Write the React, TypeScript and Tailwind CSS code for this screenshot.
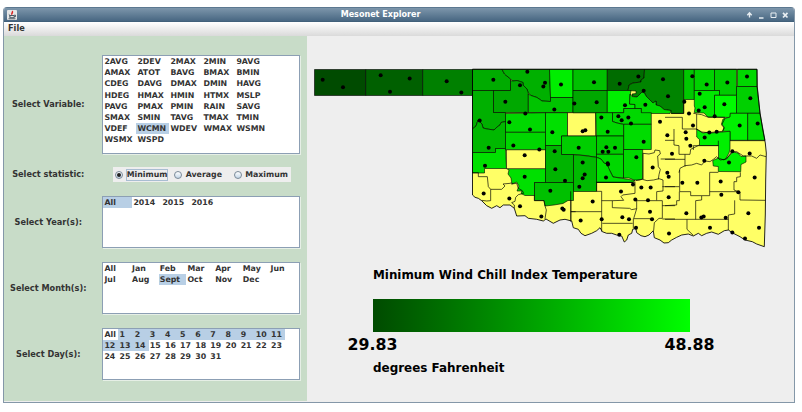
import React from "react";

type Shape = [string, string];

/* ---------- County map data ---------- */

const OUTLINE =
  "472.5,69.3 757,69.3 757.3,87 760,113 763,131 765.3,143 766.3,153 765.7,180 765.3,215 764.3,246.7 756.7,244 752.3,241.7 745,240 740,236.7 733.3,233.3 728.3,230 724.3,230.7 718.3,234.3 711.7,232 706.7,233.3 701.7,235.7 698.3,233.3 693.3,236 688.3,234 681.7,235 676.7,237.3 671.7,240 668.3,242.7 664,243 660,240 654.3,237.7 653.3,230.7 649,235 645,236.7 641,235.7 636.7,232.7 635.7,228.3 632.7,229.3 631.7,233.3 628.3,235 626.7,240 624.3,242 621.7,236 616.7,235 611.7,233.3 606.7,233.3 602.3,231.7 600,227.7 596.7,230.7 591.7,233.3 585,235.7 581,233.3 578.3,229.3 573.3,227.7 571.7,221 565,219.3 560,220 553.3,223.3 546,219 543.3,221 536.7,219.3 528.3,218.3 525,215.7 516.7,216 514.3,208.3 510,205 503.3,205 500,207.7 496.7,205.7 491.7,208.3 486.7,205.7 481.7,200.7 478.3,198.3 475,197.3 472.5,195";

const COUNTIES: Shape[] = [
  ["#004b00", "314.5,69.5 365.7,69.5 365.7,95.5 314.5,95.5"],
  ["#006000", "365.7,69.5 422.7,69.5 422.7,95.5 365.7,95.5"],
  ["#008000", "422.7,69.5 472.5,69.5 472.5,95.5 422.7,95.5"],
  ["#00ab00", "472.5,69.3 502,69.3 504.5,74 510.5,79 510.5,90.5 472.5,90.5"],
  ["#00b000", "502,69.3 549.5,69.3 550.5,97 550.5,101.5 542,101 537,97.5 531,95.5 528,92.5 527,89 523,85 523,82.5 517,80.5 513,81 510.5,79 504.5,74"],
  ["#00ee00", "549.5,69.3 573,69.3 573,97.5 550.5,97.5"],
  ["#00b000", "472.5,90.5 493.5,90.5 493.5,112.5 505.5,112.5 505.5,121.5 501,122.5 500,125 497,127 494,130 487,129 483,128 482,124 478,120 476,126 472.5,129"],
  ["#00a800", "493.5,90.5 510.5,90.5 510.5,80.5 513,81 517,80.5 523,82.5 523,85 527,89 528.3,93 528.3,112.5 493.5,112.5"],
  ["#00c400", "528.3,94 531,95.5 537,97.5 542,101 550.5,101.5 550.5,97.5 573,97.5 573,112.5 528.3,112.5"],
  ["#00d800", "505.5,113.5 545.5,112.7 545.5,132.3 505.5,132.3"],
  ["#00b800", "472.5,129 476,126 478,120 482,124 483,128 487,129 494,130 497,127 500,125 501,122.5 505.5,121.5 505.5,148.5 495.5,148.5 495.5,152.5 472.5,152.5"],
  ["#00d600", "505.5,132.3 545.5,132.3 545.5,150 505.5,150"],
  ["#00e000", "545.5,112.7 567.5,112.7 567.5,136 561.5,136 561.5,145.5 545.5,145.5"],
  ["#ffff66", "567.5,112.7 595.5,112.7 595.5,136 567.5,136"],
  ["#00ce00", "561.5,136 596.5,136 596.5,157.3 585,155.5 573.5,154.5 561.5,154.5"],
  ["#00e000", "472.5,152.5 495.5,152.5 495.5,148.5 505.5,148.5 506.5,168.5 484.5,168.5 484.5,173 472.5,173"],
  ["#00e000", "506.5,168.5 545.5,168.5 545.5,182.5 534.5,182.5 534.5,195.5 525,195.5 521,193.5 522,191 517,191 519,186 516.5,182 512,184 511,178 508,174 509,170"],
  ["#ffff66", "506.5,149.8 545.5,149.8 545.5,168.7 506.5,168.7"],
  ["#00b400", "545.5,145.5 561.5,145.5 561.5,154.5 573.5,154.5 573.5,182.5 545.5,182.5"],
  ["#00c000", "534.5,182.5 573.5,182.5 573.5,200.5 568,200.5 563,203.5 554,205 545,206 544,200.5 534.5,200.5"],
  ["#00ba00", "573.5,154.7 585,155.7 596.5,157.3 596.5,191.5 573.5,191.5"],
  ["#00c000", "573,69.3 607.3,69.3 607.3,90.5 573,90.5"],
  ["#00a800", "573,90.5 607.3,90.5 607.3,112.7 573,112.7"],
  ["#006c00", "607.3,69.3 644.5,69.3 644,78 641,80 641,82 633,83 629,85 628,90.5 607.3,90.5"],
  ["#008400", "644.5,69.3 683.7,69.3 683.7,113.5 671,113.5 671,110.5 664,109.5 660,106 656,105 656,101 653,103 650,100 646,96 644.5,93 642,92 640,94 637,97 632,96 632,94 636,93.5 636,91 628,90.5 629,85 633,83 641,82 641,80 644,78"],
  ["#00ee00", "607.3,90.5 631,90.5 630,96 629.5,104 635,104.5 635,108.5 623.7,108.5 623.7,112.7 607.3,112.7"],
  ["#00dc00", "630,94 632,96.5 637,97 640,94 642,92 644.5,93 646,96 650,100 653,103 656,101 656,105 660,106 664,109.5 671,110.5 670,113.5 641.3,113.5 641.3,108.5 635,108.5 635,104.5 629.5,104"],
  ["#00d800", "623.7,108.5 641.3,108.5 641.3,112.7 651.3,112.7 651.3,124.3 623.7,124.3 617,123 612.5,121.5 612.5,112.7 623.7,112.7"],
  ["#00d800", "595.7,112.7 612.5,112.7 612.5,121.5 617,123 623.7,124.5 623.7,136 596.5,136"],
  ["#00dc00", "623.7,124.3 651.3,124.3 651.3,149.5 623.7,149.5"],
  ["#00cc00", "596.5,136 623.5,136 623.5,154.3 596.5,154.3"],
  ["#00d800", "596.5,154.3 623.5,154.3 623.5,178 613,177 610,171 604,163 601,159 596.5,157.3"],
  ["#ffff66", "596.5,182.3 610,182.3 633,182.3 620,182.3"],
  ["#00e000", "596.5,157.3 601,159 604,163 607,164 610,171 613,177 620,178 635,180.5 633,182.3 596.5,182.3"],
  ["#00d800", "623.5,149.5 642.7,149.5 642.7,179 639,180 634,180 629,178 623.5,178"],
  ["#00c800", "683.7,69.3 694.3,69.3 694.3,99.5 683.7,99.5"],
  ["#00d200", "694.3,69.3 714.5,69.3 714.5,90.5 694.3,90.5"],
  ["#00cc00", "714.5,69.3 736.5,69.3 736.5,95.3 719.5,95.3 719.5,90.5 714.5,90.5"],
  ["#00d800", "737.5,69.3 757,69.3 757,86.5 737.5,86.5"],
  ["#00d000", "736.5,86.5 757,86.5 760,113.3 736.5,113.3"],
  ["#00e800", "694.3,90.5 719.5,90.5 719.5,95.3 714.5,95.3 714.5,117 708,117 704,113 694.3,112.5 695,108 694.3,106"],
  ["#00fa00", "714.5,95.3 736.5,95.3 736.5,113.3 730.3,113.3 730.3,117.5 714.5,117"],
  ["#00f000", "730.3,113.3 747.7,113.3 747.7,140.3 730,140.3 730,131.3 722.5,131.3 724,127 721.5,124 723,119 730,117"],
  ["#00dc00", "747.7,113.3 760,113.3 765,140.3 747.7,140.3"],
  ["#00f000", "696.7,129.3 703,133 709,132 711,133 730,131.3 730,149 729,153 725,160 718.5,160 718.5,145.5 699.5,145.5 699.5,139.5 696.7,137"],
  ["#00f000", "718.5,158 712.7,160.5 713.3,166 718.3,166.5 718.3,171.5 740.7,171.7 741,164.5 746,162 746,156 741,156.5 738,153 733,152 729,156 724,160"],
];

const BORDERS: { x: number; y: number; d: string }[] = [
  {
    x: 465,
    y: 140,
    d: "M22 98H40V110H67L70 140L77 148V182L65 183L50 181M77 148H110L120 138L114 132L135 130L140 128M138 132L155 130L160 145L172 152L176 160L160 164L152 172L150 184L140 188L148 195L148 205M208 165V182H237L240 198L244 210L240 237M318 180V243M318 215H332",
  },
  {
    x: 565,
    y: 140,
    d: "M17 154V245M17 215H110M95 127V154H110V180V275M95 127H210M210 125V160L173 165L168 170L176 181L142 182V203L194 205L200 209L215 206V182H292M110 182H142M234 40V118M234 40L252 42L268 38L270 30L284 32L286 42L278 48L280 80L286 88L282 104L280 118M212 122L232 118L246 122L266 120L282 116L294 120V153L275 155V181M287 57H330M292 140H330M292 182V235H282L268 248L266 272M292 197H330M292 237H330M112 250H203M215 206L206 236H266M205 236V265",
  },
  {
    x: 665,
    y: 60,
    d: "M0 172H52V207H95M27 207V241H0M56 119V160H20M95 162V210M95 207L110 216L130 218L173 214L178 204L170 195L180 175M85 160L110 164L130 172H180M85 270V257H160V242M195 242H300",
  },
  {
    x: 665,
    y: 140,
    d: "M27 0V15L42 17V43H60V80M60 43H75L77 28L103 15M0 58H60M0 140H43M42 98L45 85L60 77L80 75L95 70L110 75L120 63L135 65L145 58L155 50L165 60L185 57L200 35L215 35L235 48L260 48L275 55L285 45L303 50M44 90V155H77V167H134V97H160M43 155V182H35V195L0 197M134 155H225V180L301 181M226 97V110L215 112V125H207V150L220 155M110 168V180L92 182V238M209 181V222L190 225V270M0 238H190M66 238V268L85 286",
  },
];

/* Station positions, in the same sheet units. */
const STATIONS: { x: number; y: number; p: number[][] }[] = [
  { x: 300, y: 55, p: [[68, 74], [129, 96], [242, 60], [329, 70], [270, 110], [440, 78], [484, 112]] },
  { x: 465, y: 60, p: [[85, 59], [187, 35], [165, 75], [240, 68], [235, 79], [288, 73], [121, 125], [181, 160], [268, 148], [44, 181], [133, 186], [195, 208], [262, 216], [71, 263], [145, 256], [223, 268], [328, 130]] },
  { x: 465, y: 140, p: [[60, 77], [179, 45], [179, 110], [269, 33], [271, 87], [300, 122], [256, 152], [56, 160], [133, 175], [165, 198], [229, 229], [292, 205], [296, 209]] },
  { x: 565, y: 60, p: [[87, 66], [220, 49], [164, 71], [294, 57], [95, 126], [236, 92], [309, 108], [180, 135], [241, 134], [109, 172], [160, 168], [190, 172], [170, 180], [198, 190], [128, 215], [53, 213], [61, 210], [285, 185], [307, 225], [41, 263], [236, 245]] },
  { x: 565, y: 140, p: [[113, 35], [130, 35], [124, 21], [150, 23], [53, 67], [59, 103], [53, 114], [43, 140], [128, 69], [129, 73], [123, 112], [214, 51], [263, 82], [321, 41], [307, 98], [311, 110], [204, 133], [229, 142], [257, 142], [168, 154], [83, 184], [211, 178], [249, 180], [311, 171], [255, 215], [47, 241], [110, 237], [172, 231], [192, 237], [261, 237], [213, 263], [163, 284], [312, 280]] },
  { x: 665, y: 60, p: [[82, 48], [125, 73], [187, 67], [246, 49], [104, 101], [256, 114], [58, 125], [119, 141], [101, 151], [178, 132], [149, 168], [72, 160], [84, 196], [224, 196], [278, 190], [62, 216], [133, 217], [155, 215], [119, 232], [64, 236]] },
  { x: 665, y: 140, p: [[76, 17], [118, 62], [192, 67], [202, 33], [254, 40], [52, 128], [97, 128], [167, 124], [269, 112], [220, 156], [169, 164], [64, 219], [109, 232], [116, 229], [182, 233], [250, 219], [135, 263], [282, 263], [202, 277], [240, 295]] },
];

function CountyMap() {
  return (
    <svg className="block h-[190px] w-[470px]" viewBox="307 60 470 190">
      <polygon points={OUTLINE} fill="#ffff66" />
      {COUNTIES.map(([fill, points], i) => (
        <polygon key={i} points={points} fill={fill} stroke="#000" strokeOpacity=".75" strokeWidth=".8" />
      ))}
      {BORDERS.map((b, i) => (
        <path key={i} d={b.d} transform={`translate(${b.x} ${b.y}) scale(.33333)`} fill="none" stroke="#000" strokeOpacity=".75" strokeWidth="2.7" />
      ))}
      <polygon points={OUTLINE} fill="none" stroke="#000" strokeOpacity=".85" strokeWidth="1" />
      {STATIONS.map((s, i) => (
        <g key={i}>
          {s.p.map(([x, y], j) => (
            <circle key={j} cx={s.x + x / 3} cy={s.y + y / 3 + 0.2} r="2" />
          ))}
        </g>
      ))}
    </svg>
  );
}

/* ---------- Selection lists ---------- */

function PickList({ items, selected, box, columns }: { items: string[]; selected: string[]; box: string; columns: string }) {
  return (
    <div className={`w-[198px] border border-[#8c9fb4] bg-white shadow-[1px_1px_0_#e6efe6] ${box}`}>
      <div className={`grid ${columns} auto-rows-[11.2px]`}>
        {items.map((t) => (
          <div key={t} className={`whitespace-nowrap pl-[1.2px] leading-[11.2px] ${selected.includes(t) ? "bg-[#b8cfe5]" : ""}`}>
            {t}
          </div>
        ))}
      </div>
    </div>
  );
}

function Row({ label, height, children }: { label: string; height: string; children: React.ReactNode }) {
  return (
    <div className={`flex items-center ${height}`}>
      <div className="w-[98.2px] pr-[9.7px] text-center text-[8.2px]">{label}</div>
      {children}
    </div>
  );
}

function Radio({ label, on, className }: { label: string; on?: boolean; className: string }) {
  return (
    <div className={`flex items-center ${className}`}>
      <span className="flex size-[8px] items-center justify-center rounded-full border border-[#7a8a99] bg-linear-to-b from-white to-[#c4d7e8]">
        {on && <span className="size-[4px] rounded-full bg-[#222]" />}
      </span>
      <span className={`ml-[2.5px] border leading-[10px] ${on ? "border-[#a9bdd2]" : "border-transparent"}`}>{label}</span>
    </div>
  );
}

const VARIABLES =
  "2AVG 2DEV 2MAX 2MIN 9AVG AMAX ATOT BAVG BMAX BMIN CDEG DAVG DMAX DMIN HAVG HDEG HMAX HMIN HTMX MSLP PAVG PMAX PMIN RAIN SAVG SMAX SMIN TAVG TMAX TMIN VDEF WCMN WDEV WMAX WSMN WSMX WSPD".split(" ");
const MONTHS = "All Jan Feb Mar Apr May Jun Jul Aug Sept Oct Nov Dec".split(" ");
const DAYS = ["All", ...Array.from({ length: 31 }, (_, i) => String(i + 1))];

export default function App() {
  return (
    <div className="h-[412px] w-[802px] overflow-hidden bg-white pl-[3px] pt-[7px] font-['DejaVu_Sans',sans-serif] text-[7.85px] font-bold text-[#333]">
      <div className="flex h-[396px] w-[792px] flex-col overflow-hidden rounded-t-[4px] border-x border-b border-[#8497a8] bg-[#eee]">
        {/* Title bar */}
        <div className="flex h-[15px] shrink-0 items-center border-b border-t border-b-[#41607a] border-t-[#5c7890] bg-linear-to-b from-[#7d96ab] to-[#486782] pl-[3px] pr-[4px]">
          <svg className="size-[10px]" viewBox="0 0 10 10">
            <rect width="10" height="10" rx="1" fill="#e6e6e6" />
            <path d="M1.8 4.5L3.5 6M2.8 5.5h4.4v2.2H2.8zM7.2 5.2h1.3v1.5H7.2M1.5 8.8h7" fill="none" stroke="#3c4c58" strokeWidth=".9" />
            <path d="M5 1.2c1.6 1-1 2 0 3.4" fill="none" stroke="#d22" strokeWidth="1.6" />
          </svg>
          <div className="flex-1 pr-[2px] text-center text-[8.05px] leading-[13px] text-white">Mesonet Explorer</div>
          <svg className="h-[9px] w-[44px]" viewBox="0 0 44 9" fill="none" stroke="#e8eef2" strokeWidth="1.4">
            <path d="M3.5 7.5V3M1.3 5.2L3.5 2.8L5.7 5.2" />
            <path d="M13 8H17.5" />
            <path d="M25 3H30V7.5H25Z" strokeWidth="1" />
            <path d="M37 2.8L41.5 7.5M41.5 2.8L37 7.5" strokeWidth="1.7" />
          </svg>
        </div>
        {/* Menu bar */}
        <div className="flex h-[14px] shrink-0 items-center bg-linear-to-b from-white to-[#dadada] pb-[2px] pl-[4px] text-[8.2px] leading-none">File</div>
        <div className="flex min-h-0 flex-1">
          {/* Query panel */}
          <div className="flex h-[365px] w-[303px] shrink-0 flex-col bg-[#c8dcc8] pt-[19px]">
            <Row label="Select Variable:" height="h-[99px]">
              <PickList items={VARIABLES} selected={["WCMN"]} box="h-[99px]" columns="grid-cols-[33px_33px_33px_33px_33px]" />
            </Row>
            <div className="h-[13px]" />
            <Row label="Select statistic:" height="h-[15px]">
              <div className="ml-[11px] flex h-[15px] w-[178px] items-center bg-[#eee]">
                <Radio label="Minimum" on className="ml-[2px] w-[59px]" />
                <Radio label="Average" className="w-[59.5px]" />
                <Radio label="Maximum" className="" />
              </div>
            </Row>
            <div className="h-[14px]" />
            <Row label="Select Year(s):" height="h-[52px]">
              <PickList items={["All", "2014", "2015", "2016"]} selected={["All"]} box="h-[52px]" columns="grid-cols-[29px_29px_29px_29px]" />
            </Row>
            <div className="h-[14px]" />
            <Row label="Select Month(s):" height="h-[52px]">
              <PickList items={MONTHS} selected={["Sept"]} box="h-[52px]" columns="grid-cols-[repeat(7,27.7px)]" />
            </Row>
            <div className="h-[14px]" />
            <Row label="Select Day(s):" height="h-[52px]">
              <PickList items={DAYS} selected={DAYS.slice(1, 15)} box="h-[52px]" columns="grid-cols-[repeat(12,15.15px)]" />
            </Row>
          </div>
          {/* Results panel */}
          <div className="flex flex-1 flex-col pt-[24px] text-black">
            <CountyMap />
            <div className="mt-[18px] pl-[66px] text-[11.9px] leading-[14px]">Minimum Wind Chill Index Temperature</div>
            <div className="ml-[66px] mt-[17px] h-[33px] w-[317px] bg-linear-to-r from-[#004b00] to-[#00ff00]" />
            <div className="ml-[40.5px] mt-[4px] flex w-[367px] justify-between text-[15.8px] leading-[18px]">
              <span>29.83</span>
              <span>48.88</span>
            </div>
            <div className="mt-[7px] pl-[66px] text-[11.95px] leading-[14px]">degrees Fahrenheit</div>
          </div>
        </div>
      </div>
    </div>
  );
}
